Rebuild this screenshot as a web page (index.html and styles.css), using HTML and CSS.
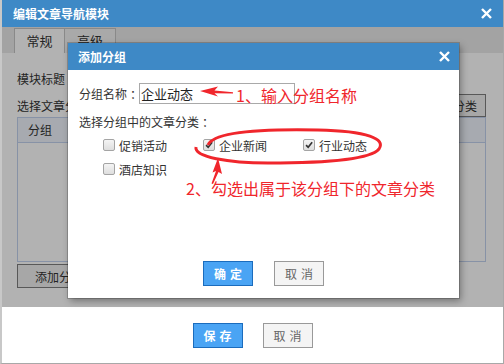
FILE: index.html
```html
<!DOCTYPE html>
<html lang="zh">
<head>
  <meta charset="UTF-8" />
  <title>编辑文章导航模块</title>
  <link rel="stylesheet" href="styles.css">
</head>
<body>

  <!-- 外层窗口 -->
  <div class="win">
    <div class="win-head">
      <span class="win-title">编辑文章导航模块</span>
      <svg class="close" width="11" height="11" viewBox="0 0 11 11"><path d="M1 1L10 10M10 1L1 10" /></svg>
    </div>

    <div class="win-body">
      <div class="tabs">
        <span class="tab active">常规</span>
        <span class="tab"><span class="tab-txt">高级</span></span>
      </div>
      <div class="pane">
        <div class="row">模块标题<span class="colon">：</span><input class="text" type="text" /></div>
        <div class="row row-split">
          <span>选择文章分类<span class="colon">：</span></span>
          <button class="btn-plain">管理分类</button>
        </div>
        <div class="grid">
          <div class="grid-head">分组</div>
        </div>
        <button class="btn-plain btn-add">添加分组</button>
      </div>
      <div class="mask"></div>
    </div>

    <div class="win-foot">
      <button class="btn btn-primary">保存</button>
      <button class="btn">取消</button>
    </div>

    <!-- 添加分组弹窗 -->
    <div class="modal">
      <div class="modal-head">
        <span class="modal-title">添加分组</span>
        <svg class="close" width="11" height="11" viewBox="0 0 11 11"><path d="M1 1L10 10M10 1L1 10" /></svg>
      </div>
      <div class="modal-body">
        <div class="name-row">
          <label>分组名称<span class="colon">：</span></label>
          <input class="name-input" type="text" value="企业动态" />
        </div>
        <p class="sub">选择分组中的文章分类<span class="colon">：</span></p>
        <div class="checks">
          <span class="check"><i class="cb"></i>促销活动</span>
          <span class="check"><i class="cb on"><svg viewBox="0 0 12 12"><path d="M2.5 6.2L5 8.8L9.8 2.8" /></svg></i>企业新闻</span>
          <span class="check"><i class="cb on"><svg viewBox="0 0 12 12"><path d="M2.5 6.2L5 8.8L9.8 2.8" /></svg></i>行业动态</span>
          <span class="check"><i class="cb"></i>酒店知识</span>
        </div>
        <div class="modal-foot">
          <button class="btn btn-primary">确定</button>
          <button class="btn">取消</button>
        </div>
      </div>

      <!-- 红色标注 -->
      <svg class="marks" width="391" height="255" viewBox="0 0 391 255">
        <path class="fill" d="M132 48 L150 43.5 L146.5 47.6 L165 49.2 L165 50.4 L146.5 50.2 L150 53.5 Z" />
        <path class="line" d="M140 102 C 146 88, 200 86, 250 87 C 300 88, 318 96, 311 106 C 302 117, 250 120, 200 120 C 160 120, 126 114, 128 104" />
        <path class="fill" d="M150 115 L154 131 L150.5 129 L145 141 L143.5 140.5 L148 128 L144.5 129.5 Z" />
      </svg>
      <div class="note note-1">1、输入分组名称</div>
      <div class="note note-2">2、勾选出属于该分组下的文章分类</div>
    </div>
  </div>

</body>
</html>
```

FILE: styles.css
```css
body {
  margin: 0;
  font-family: "Noto Sans CJK SC", sans-serif;
  font-size: 12px;
  color: #333;
  background: #fff;
}
.colon {
  display: inline-block;
  width: 12px;
  padding-left: 3px;
  box-sizing: border-box;
  white-space: nowrap;
}
.win {
  position: relative;
  width: 504px;
  height: 364px;
  box-sizing: border-box;
  border-left: 2px solid #c8c8c8;
  border-right: 1px solid #a8a8a8;
  border-bottom: 1px solid #a8a8a8;
  display: flex;
  flex-direction: column;
}
.win-head {
  height: 27px;
  flex-shrink: 0;
  background: #3e89c6;
  color: #fff;
  display: flex;
  align-items: center;
  justify-content: space-between;
  padding: 0 11px;
}
.win-title, .modal-title {
  font-weight: bold;
  font-size: 12px;
}
.close path {
  stroke: #fff;
  stroke-width: 2.4;
  fill: none;
}
.win-body {
  position: relative;
  height: 280px;
  flex-shrink: 0;
}
.tabs {
  height: 26px;
  box-sizing: border-box;
  padding: 1px 0 0 12px;
  background: #eaeaea;
  display: flex;
}
.tab {
  width: 51px;
  height: 25px;
  box-sizing: border-box;
  border: 1px solid #c4c4c4;
  border-bottom: none;
  background: #f2f2f2;
  text-align: center;
  line-height: 24px;
  font-size: 13px;
}
.tab + .tab {
  border-left: none;
}
.tab.active {
  background: #fff;
}
.tab-txt {
  display: inline-block;
  line-height: 13px;
  vertical-align: top;
  margin-top: 5px;
}
.pane {
  padding: 17px 17px 0 15px;
}
.row {
  height: 18px;
  line-height: 18px;
  display: flex;
  align-items: center;
  white-space: nowrap;
}
.row .text {
  width: 300px;
  height: 20px;
  border: 1px solid #aaa;
  margin-left: 4px;
}
.row-split {
  margin-top: 6px;
  height: 23px;
  justify-content: space-between;
}
.btn-plain {
  height: 23px;
  padding: 0 8px;
  border: 1px solid #7f7f7f;
  background: #f0f0f0;
  font-family: inherit;
  font-size: 12px;
  color: #333;
}
.grid {
  height: 145px;
  box-sizing: border-box;
  border: 1px solid #c2d2ee;
}
.grid-head {
  height: 24px;
  line-height: 24px;
  padding-left: 10px;
  background: #eff4fc;
  border-bottom: 1px solid #c2d2ee;
}
.btn-add {
  display: block;
  margin-top: 2px;
  height: 24px;
  width: 84px;
}
.mask {
  position: absolute;
  inset: 0;
  background: rgba(0, 0, 0, 0.3);
}
.win-foot {
  display: flex;
  justify-content: center;
  gap: 20px;
  padding-top: 16px;
}
.btn {
  width: 50px;
  height: 25px;
  box-sizing: border-box;
  border: 1px solid #999;
  background: #f4f4f4;
  color: #666;
  font-family: inherit;
  font-size: 12px;
  letter-spacing: 4px;
  padding: 0 0 0 4px;
}
.btn-primary {
  background: #4aa4f4;
  border-color: #1b6cbd;
  color: #fff;
  font-weight: bold;
}
.modal {
  position: absolute;
  left: 66px;
  top: 43px;
  width: 391px;
  height: 255px;
  background: #fff;
  box-shadow: 0 0 0 1px rgba(0, 0, 0, 0.18), 2px 3px 7px rgba(0, 0, 0, 0.35);
  display: flex;
  flex-direction: column;
}
.modal-head {
  height: 27px;
  flex-shrink: 0;
  background: #3e89c6;
  color: #fff;
  display: flex;
  align-items: center;
  justify-content: space-between;
  padding: 0 9px 0 10px;
}
.modal-body {
  flex: 1;
  display: flex;
  flex-direction: column;
  padding: 13px 0 12px 11px;
}
.name-row {
  display: flex;
  align-items: center;
  height: 21px;
  white-space: nowrap;
}
.name-row label {
  width: 60px;
  flex-shrink: 0;
}
.name-input {
  width: 156px;
  height: 21px;
  box-sizing: border-box;
  border: 1px solid #a9a9a9;
  padding: 0 1px;
  font-family: inherit;
  font-size: 13px;
  color: #222;
}
.sub {
  margin: 9px 0 0;
  line-height: 18px;
}
.checks {
  margin-top: 2px;
  padding-left: 24px;
  display: grid;
  grid-template-columns: repeat(3, 100px);
  grid-auto-rows: 24px;
  align-items: center;
}
.check {
  display: flex;
  align-items: center;
}
.cb {
  width: 12px;
  height: 12px;
  box-sizing: border-box;
  border: 1px solid #a4a4a4;
  border-radius: 2px;
  background: linear-gradient(#f4f4f4, #dedede);
  margin-right: 4px;
  display: flex;
}
.cb svg {
  width: 10px;
  height: 10px;
}
.cb svg path {
  stroke: #333;
  stroke-width: 2;
  fill: none;
}
.modal-foot {
  margin-top: auto;
  margin-left: -11px;
  display: flex;
  justify-content: center;
  gap: 21px;
}
.marks {
  position: absolute;
  left: 0;
  top: 0;
  pointer-events: none;
}
.marks .fill {
  fill: #f0262c;
}
.marks .line {
  stroke: #f0262c;
  stroke-width: 3;
  fill: none;
}
.note {
  position: absolute;
  color: #f0262c;
  font-size: 16px;
  line-height: 20px;
  white-space: nowrap;
}
.note-1 {
  left: 168px;
  top: 42px;
}
.note-2 {
  left: 118px;
  top: 135px;
}
```
